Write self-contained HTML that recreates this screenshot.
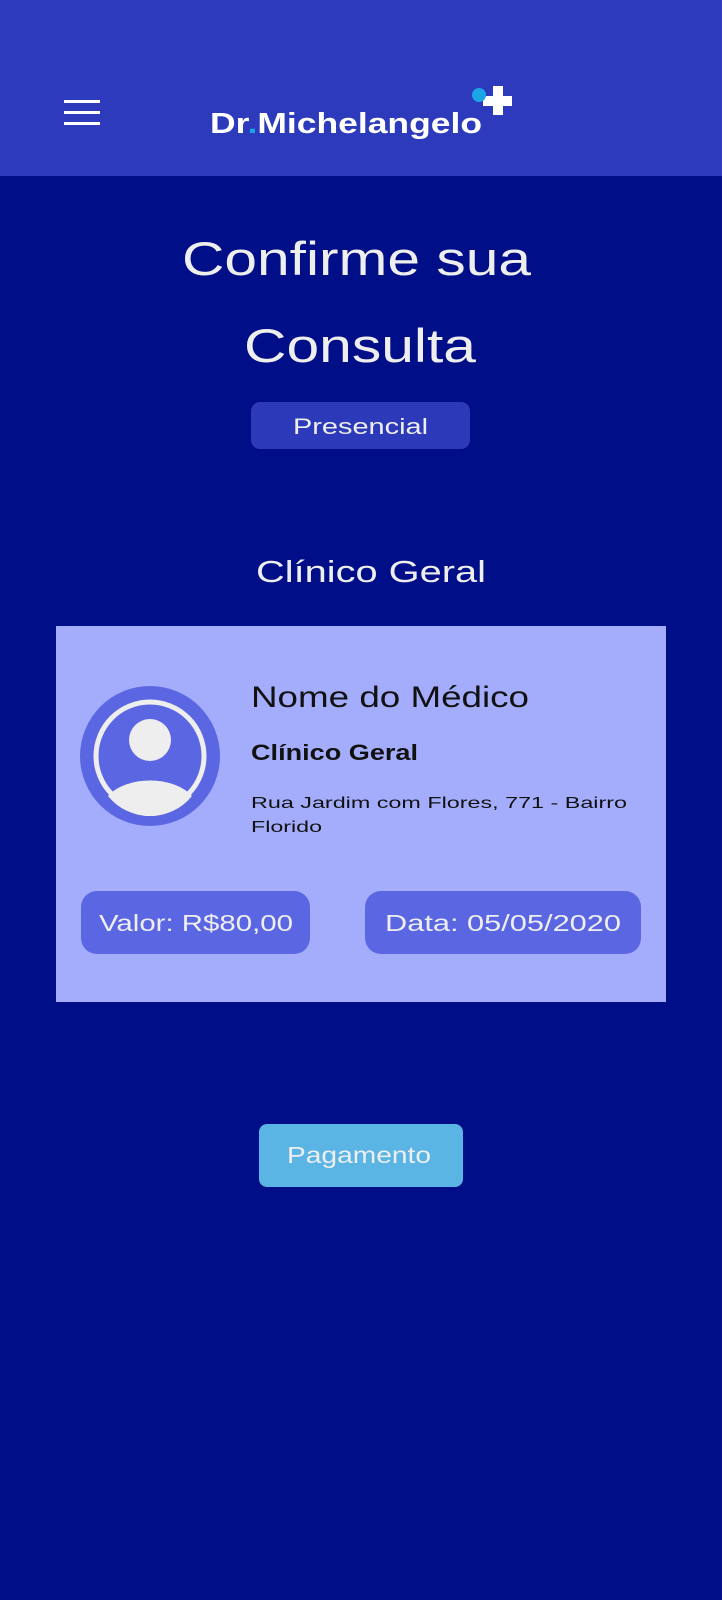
<!DOCTYPE html>
<html><head><meta charset="utf-8"><style>
*{margin:0;padding:0;box-sizing:border-box}
body{width:722px;height:1600px;background:#000f87;font-family:"Liberation Sans",sans-serif;position:relative;overflow:hidden}
.abs{position:absolute}
.hdr{left:0;top:0;width:722px;height:176px;background:#2c3abb}
.c{text-align:center;white-space:nowrap}
</style></head><body>
<div class="abs hdr"></div>
<div class="abs" style="left:64px;top:100px;width:36px;height:3px;background:#fff"></div>
<div class="abs" style="left:64px;top:111px;width:36px;height:3px;background:#fff"></div>
<div class="abs" style="left:64px;top:122px;width:36px;height:3px;background:#fff"></div>
<svg class="abs" style="left:0;top:0" width="722" height="176">
<text x="210" y="133" font-family="Liberation Sans" font-weight="bold" font-size="29" fill="#fff" textLength="272" lengthAdjust="spacingAndGlyphs">Dr<tspan fill="#1aa6e6">.</tspan>Michelangelo</text>
<rect x="493" y="86" width="10" height="29" fill="#fff"/>
<rect x="483" y="96" width="29" height="10" fill="#fff"/>
<circle cx="479" cy="95" r="7" fill="#1aa6e6"/>
</svg>
<svg class="abs" style="left:0;top:176px" width="722" height="440">
<text x="182" y="99" font-size="47" fill="#eee" textLength="349" lengthAdjust="spacingAndGlyphs" font-family="Liberation Sans">Confirme sua</text>
<text x="244" y="186" font-size="47" fill="#eee" textLength="232" lengthAdjust="spacingAndGlyphs" font-family="Liberation Sans">Consulta</text>
<rect x="251" y="226" width="219" height="47" rx="9" fill="#2c3ab9"/>
<text x="293" y="258" font-size="22" fill="#eee" textLength="135" lengthAdjust="spacingAndGlyphs" font-family="Liberation Sans">Presencial</text>
<text x="256" y="406" font-size="31" fill="#eee" textLength="230" lengthAdjust="spacingAndGlyphs" font-family="Liberation Sans">Clínico Geral</text>
</svg>
<svg class="abs" style="left:0;top:600px" width="722" height="620">
<rect x="56" y="26" width="610" height="376" fill="#a4acfc"/>
<ellipse cx="150" cy="156" rx="70" ry="70" fill="#5b67e2"/>
<circle cx="150" cy="156" r="54" fill="none" stroke="#eee" stroke-width="5"/>
<circle cx="150" cy="140" r="21" fill="#eee"/>
<path d="M108 196 A48 30 0 0 1 192 196 A54 54 0 0 1 108 196 Z" fill="#eee"/>
<text x="251" y="107" font-size="30" fill="#111" textLength="278" lengthAdjust="spacingAndGlyphs" font-family="Liberation Sans">Nome do Médico</text>
<text x="251" y="160" font-size="22" font-weight="bold" fill="#111" textLength="167" lengthAdjust="spacingAndGlyphs" font-family="Liberation Sans">Clínico Geral</text>
<text x="251" y="208" font-size="16" fill="#111" textLength="376" lengthAdjust="spacingAndGlyphs" font-family="Liberation Sans">Rua Jardim com Flores, 771 - Bairro</text>
<text x="251" y="232" font-size="16" fill="#111" textLength="71" lengthAdjust="spacingAndGlyphs" font-family="Liberation Sans">Florido</text>
<rect x="81" y="291" width="229" height="63" rx="16" fill="#5b67e2"/>
<text x="99" y="331" font-size="23" fill="#eee" textLength="194" lengthAdjust="spacingAndGlyphs" font-family="Liberation Sans">Valor:  R$80,00</text>
<rect x="365" y="291" width="276" height="63" rx="16" fill="#5b67e2"/>
<text x="385" y="331" font-size="23" fill="#eee" textLength="236" lengthAdjust="spacingAndGlyphs" font-family="Liberation Sans">Data:  05/05/2020</text>
<rect x="259" y="524" width="204" height="63" rx="8" fill="#5ab4e4"/>
<text x="287" y="563" font-size="23" fill="#eee" textLength="144" lengthAdjust="spacingAndGlyphs" font-family="Liberation Sans">Pagamento</text>
</svg>
</body></html>
